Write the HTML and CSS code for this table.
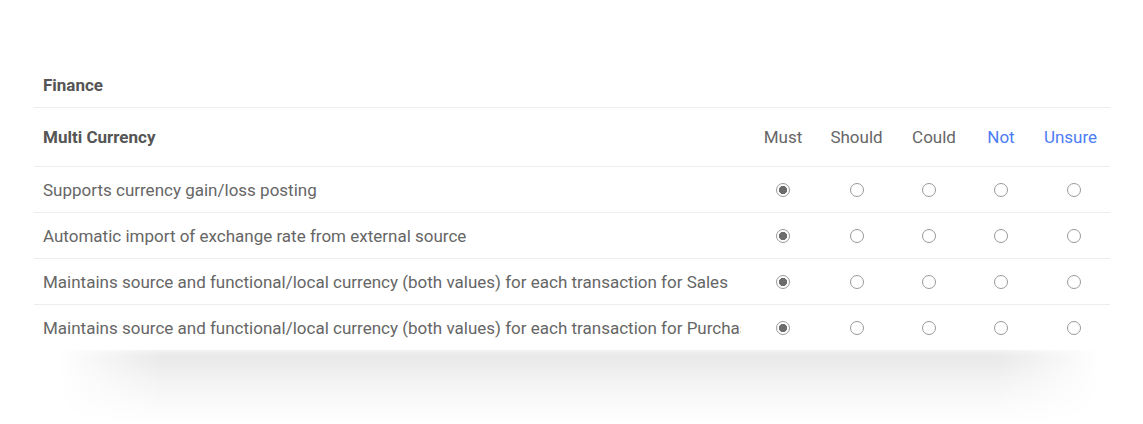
FILE: index.html
```html
<!DOCTYPE html>
<html lang="en">
<head>
    <meta charset="UTF-8">
    <title>Requirements - Finance</title>
    <link rel="stylesheet" href="styles.css">
</head>
<body>
    <div class="sheet">
        <div class="section-title">Finance</div>

        <div class="row head">
            <div class="label"><span>Multi Currency</span></div>
            <div class="opt">Must</div>
            <div class="opt">Should</div>
            <div class="opt could">Could</div>
            <div class="opt blue">Not</div>
            <div class="opt blue unsure">Unsure</div>
        </div>

        <div class="row">
            <div class="label"><span>Supports currency gain/loss posting</span></div>
            <div class="opt"><i class="radio checked"></i></div>
            <div class="opt"><i class="radio"></i></div>
            <div class="opt"><i class="radio"></i></div>
            <div class="opt"><i class="radio"></i></div>
            <div class="opt"><i class="radio"></i></div>
        </div>

        <div class="row">
            <div class="label"><span>Automatic import of exchange rate from external source</span></div>
            <div class="opt"><i class="radio checked"></i></div>
            <div class="opt"><i class="radio"></i></div>
            <div class="opt"><i class="radio"></i></div>
            <div class="opt"><i class="radio"></i></div>
            <div class="opt"><i class="radio"></i></div>
        </div>

        <div class="row">
            <div class="label"><span>Maintains source and functional/local currency (both values) for each transaction for Sales</span></div>
            <div class="opt"><i class="radio checked"></i></div>
            <div class="opt"><i class="radio"></i></div>
            <div class="opt"><i class="radio"></i></div>
            <div class="opt"><i class="radio"></i></div>
            <div class="opt"><i class="radio"></i></div>
        </div>

        <div class="row last">
            <div class="label"><span>Maintains source and functional/local currency (both values) for each transaction for Purchases</span></div>
            <div class="opt"><i class="radio checked"></i></div>
            <div class="opt"><i class="radio"></i></div>
            <div class="opt"><i class="radio"></i></div>
            <div class="opt"><i class="radio"></i></div>
            <div class="opt"><i class="radio"></i></div>
        </div>
    </div>
</body>
</html>
```

FILE: styles.css
```css
body {
    margin: 0;
    min-height: 424px;
    background: #fff;
    font-family: Roboto, 'Liberation Sans', sans-serif;
    font-size: 17px;
    color: #666;
}

.sheet {
    position: relative;
    width: 1076px;
    margin: 62px 0 0 34px;
    background: #fff;
    border-radius: 0 0 24px 24px;
}

/* soft shadow under the card */
.sheet::after {
    content: '';
    position: absolute;
    left: 24px;
    right: 10px;
    top: 100%;
    height: 72px;
    background: linear-gradient(to bottom, rgba(0, 0, 0, 0.1), rgba(0, 0, 0, 0.04) 50%, rgba(0, 0, 0, 0));
    -webkit-mask-image: linear-gradient(to right, transparent, #000 10%, #000 90%, transparent);
    mask-image: linear-gradient(to right, transparent, #000 10%, #000 90%, transparent);
    filter: blur(5px);
}

.section-title {
    height: 45px;
    line-height: 46px;
    padding-left: 9px;
    font-weight: bold;
    color: #555;
    border-bottom: 1px solid #eee;
}

.row {
    display: grid;
    grid-template-columns: 712px 74px 73px 72px 72px 73px;
    align-items: center;
    height: 45px;
    border-bottom: 1px solid #eee;
}

.row.head {
    height: 58px;
}

.row.last {
    border-bottom: none;
}

.label {
    padding-left: 9px;
    margin-right: 5px;
    overflow: hidden;
    white-space: nowrap;
}

.head .label {
    font-weight: bold;
    color: #555;
}

.opt {
    display: flex;
    justify-content: center;
    color: #666;
}

.opt.could {
    padding-left: 10px;
}

.opt.unsure {
    padding-right: 6px;
}

.opt.blue {
    color: #4d7cf4;
}

.radio {
    display: block;
    width: 14px;
    height: 14px;
    box-sizing: border-box;
    border: 1.6px solid #999;
    border-radius: 50%;
    background: #fff;
}

.radio.checked {
    background: radial-gradient(circle, #6c6c6c 0 3.8px, #fff 4.4px);
}
```
